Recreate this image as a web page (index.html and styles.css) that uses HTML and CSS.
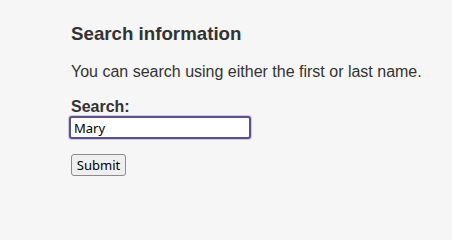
FILE: index.html
```html
<!DOCTYPE html>
<html lang="en">
<head>
<meta charset="utf-8">
<title>Search information</title>
<link rel="stylesheet" href="styles.css">
</head>
<body>
<main class="page">
  <h1 class="title">Search information</h1>
  <p class="intro">You can search using either the first or last name.</p>
  <form class="search-form">
    <label class="field-label" for="q">Search:</label>
    <input class="field-input" id="q" type="text" value="Mary" autofocus>
    <button class="submit-btn" type="button">Submit</button>
  </form>
</main>
</body>
</html>
```
FILE: styles.css
```css
html, body {
  margin: 0;
  padding: 0;
  background: #f6f6f6;
}
body {
  font-family: "Liberation Sans", Arial, sans-serif;
  color: #333333;
}
.page {
  padding: 23px 0 0 71px;
}
.title {
  margin: 0;
  font-size: 18.72px;
  line-height: 21px;
  font-weight: bold;
}
.intro {
  margin: 19px 0 0 0;
  font-size: 16px;
  line-height: 18px;
}
.search-form {
  display: flex;
  flex-direction: column;
  align-items: flex-start;
  margin-top: 17px;
}
.field-label {
  font-size: 16px;
  line-height: 18px;
  font-weight: bold;
}
.field-input {
  box-sizing: border-box;
  width: 182px;
  height: 23px;
  margin: 0 0 0 -2px;
  padding: 0 3px;
  border: 2px solid #5e4f8e;
  border-radius: 3px;
  box-shadow: 0 0 0 1px #cfc9dc;
  outline: none;
  background: #ffffff;
  font-family: "Noto Sans", sans-serif;
  font-size: 13px;
  color: #000000;
}
.submit-btn {
  box-sizing: border-box;
  margin-top: 15px;
  width: 55px;
  height: 22px;
  padding: 0;
  border: 1px solid #8a8a8a;
  border-radius: 3px;
  background: #efefef;
  font-family: "Noto Sans", sans-serif;
  font-size: 13px;
  color: #000000;
}
```
